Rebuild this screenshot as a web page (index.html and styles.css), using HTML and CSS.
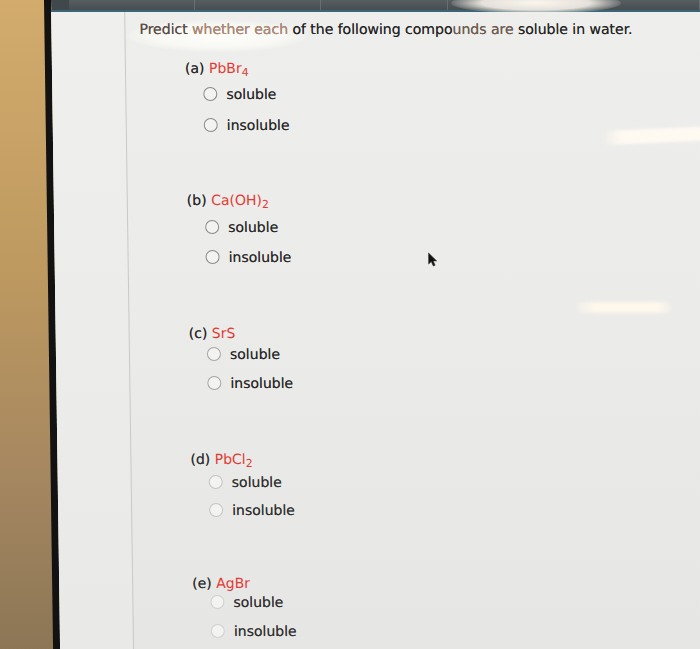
FILE: index.html
```html
<!DOCTYPE html>
<html>
<head>
<meta charset="utf-8">
<link rel="stylesheet" href="styles.css">
</head>
<body>
<div class="frame">
  <div class="bezel"></div>
  <div class="screen">
    <div class="topbar">
      <div class="tab"></div>
      <div class="tab"></div>
      <div class="tab"></div>
      <div class="tab"></div>
      <div class="tab"></div>
    </div>
    <div class="content">
      <aside class="sidebar"></aside>
      <main class="main">
        <div class="glare glare-title"></div>
        <div class="glare glare-1"></div>
        <div class="glare glare-2"></div>
        <svg class="cursor" width="11" height="15" viewBox="0 0 11 15"><path d="M1 1 L1 12 L3.6 9.6 L5.6 14 L7.4 13.2 L5.5 8.9 L9 8.9 Z" fill="#111" stroke="#333" stroke-width="0.6"/></svg>
        <p class="title"><span class="g1">Predict</span> <span class="g2">whether each</span> of the following compo<span class="g3">unds are</span> soluble in water.</p>

        <div class="q q-a">
          <div class="label">(a) <span class="chem">PbBr<sub>4</sub></span></div>
          <div class="opt o1"><span class="radio"></span>soluble</div>
          <div class="opt o2"><span class="radio"></span>insoluble</div>
        </div>
        <div class="q q-b">
          <div class="label">(b) <span class="chem">Ca(OH)<sub>2</sub></span></div>
          <div class="opt o1"><span class="radio"></span>soluble</div>
          <div class="opt o2"><span class="radio"></span>insoluble</div>
        </div>
        <div class="q q-c">
          <div class="label">(c) <span class="chem">SrS</span></div>
          <div class="opt o1"><span class="radio"></span>soluble</div>
          <div class="opt o2"><span class="radio"></span>insoluble</div>
        </div>
        <div class="q q-d">
          <div class="label">(d) <span class="chem">PbCl<sub>2</sub></span></div>
          <div class="opt o1"><span class="radio"></span>soluble</div>
          <div class="opt o2"><span class="radio"></span>insoluble</div>
        </div>
        <div class="q q-e">
          <div class="label">(e) <span class="chem">AgBr</span></div>
          <div class="opt o1"><span class="radio"></span>soluble</div>
          <div class="opt o2"><span class="radio"></span>insoluble</div>
        </div>
      </main>
    </div>
  </div>
</div>
</body>
</html>
```
FILE: styles.css
```css
html, body {
  margin: 0;
  padding: 0;
  width: 700px;
  height: 649px;
  overflow: hidden;
}
body {
  background: linear-gradient(180deg, #d2ab6d 0%, #bf9a60 40%, #a48660 75%, #8c7655 100%);
  font-family: "DejaVu Sans", Verdana, sans-serif;
}
.frame {
  display: flex;
  width: 700px;
  height: 649px;
  transform-origin: 0 0;
  transform: skewX(0.8deg);
}
.bezel {
  width: 7px;
  margin-left: 44px;
  background: #121212;
  flex: none;
}
.screen {
  flex: 1;
  display: flex;
  flex-direction: column;
  overflow: hidden;
  position: relative;
  background: linear-gradient(180deg, #eeeeec 0%, #ebebe9 50%, #e6e6e4 100%);
}
.topbar {
  height: 10px;
  flex: none;
  display: flex;
  padding-left: 18px;
  background: #41484b;
  border-bottom: 2px solid #3b6677;
  position: relative;
}
.topbar::after {
  content: "";
  position: absolute;
  left: 400px;
  top: -8px;
  width: 170px;
  height: 22px;
  border-radius: 50%;
  background: radial-gradient(ellipse at center, rgba(250,246,238,1) 0%, rgba(245,240,232,0.9) 45%, rgba(245,240,232,0) 75%);
}
.tab {
  width: 128px;
  height: 10px;
  border-right: 1px solid #6a7174;
  background: linear-gradient(180deg, #575e61, #474e51);
}
.content {
  flex: 1;
  display: flex;
}
.sidebar {
  width: 73px;
  flex: none;
  background: linear-gradient(180deg, #efefed, #e9e9e7);
  border-right: 1px solid #c9c9c6;
}
.main {
  flex: 1;
  position: relative;
  padding: 9px 0 0 14px;
  color: #262626;
  font-size: 14px;
  text-shadow: 0 0 0.6px rgba(0,0,0,0.55);
}
.title {
  margin: 0;
  position: relative;
  line-height: 17px;
  font-size: 14.2px;
  letter-spacing: -0.1px;
  color: #222;
}
.g1 { color: #5b4a42; }
.g2 { color: #b48872; }
.g3 { color: #6f5a4c; }
.q {
  margin-left: 45px;
  position: relative;
}
.label {
  height: 18px;
  line-height: 18px;
}
.chem { color: #e23b35; text-shadow: none; }
.chem sub {
  font-size: 11px;
  vertical-align: -3px;
  line-height: 0;
}
.opt {
  height: 20px;
  line-height: 20px;
  display: flex;
  align-items: center;
  margin-left: 18px;
}
.radio {
  width: 12px;
  height: 12px;
  border-radius: 50%;
  border: 1.7px solid #8a8a8a;
  background: #f3f3f2;
  margin-right: 9px;
  flex: none;
}
.q-a { margin-top: 21px; }
.q-a .o1 { margin-top: 7px; }
.q-a .o2 { margin-top: 11px; }
.q-b { margin-top: 56px; }
.q-b .o1 { margin-top: 8px; }
.q-b .o2 { margin-top: 10px; }
.q-c { margin-top: 57px; }
.q-c .o1 { margin-top: 2px; }
.q-c .o2 { margin-top: 9px; }
.q-d { margin-top: 57px; }
.q-d .o1 { margin-top: 4px; }
.q-d .o2 { margin-top: 8px; }
.q-e { margin-top: 54px; }
.q-e .o1 { margin-top: 0; }
.q-e .o2 { margin-top: 9px; }

.q-c .radio { border-color: #a6a6a6; }
.q-d .radio { border-color: #c4c4c4; border-width: 1.4px; }
.q-e .radio { border-color: #d0d0d0; border-width: 1.3px; }
.q-d, .q-e { color: #2e2e2e; }

.glare {
  position: absolute;
  pointer-events: none;
  border-radius: 50%;
}
.glare-title {
  left: 2px;
  top: 8px;
  width: 180px;
  height: 32px;
  background: radial-gradient(ellipse at center, rgba(255,255,250,0.95) 0%, rgba(255,255,250,0.6) 50%, rgba(255,255,250,0) 75%);
}
.glare-1 {
  left: 475px;
  top: 116px;
  width: 140px;
  height: 14px;
  border-radius: 7px;
  transform: rotate(-2.5deg);
  background: linear-gradient(90deg, rgba(255,250,240,0) 0%, rgba(255,250,242,0.95) 14%, rgba(255,250,242,0.95) 100%);
  filter: blur(1.5px);
}
.glare-2 {
  left: 448px;
  top: 290px;
  width: 94px;
  height: 11px;
  border-radius: 6px;
  background: linear-gradient(90deg, rgba(255,248,236,0.3), rgba(255,248,236,0.95) 20%, rgba(255,248,236,0.95) 85%, rgba(255,248,236,0.3));
  filter: blur(1.5px);
}
.cursor {
  position: absolute;
  left: 299px;
  top: 240px;
}
```
